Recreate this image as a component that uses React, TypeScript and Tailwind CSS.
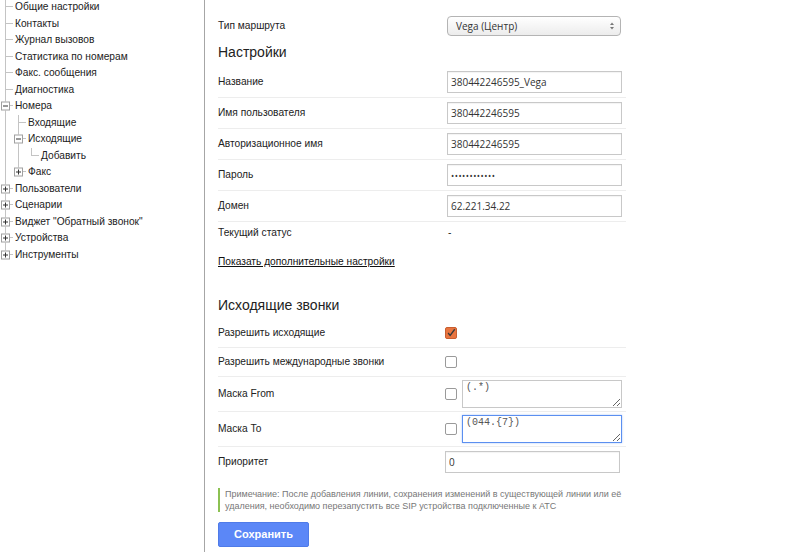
import React from 'react';

type Node = {
  label: string;
  open?: boolean;
  children?: Node[];
  collapsed?: boolean;
};

const tree: Node[] = [
  { label: 'Общие настройки' },
  { label: 'Контакты' },
  { label: 'Журнал вызовов' },
  { label: 'Статистика по номерам' },
  { label: 'Факс. сообщения' },
  { label: 'Диагностика' },
  {
    label: 'Номера',
    open: true,
    children: [
      { label: 'Входящие' },
      { label: 'Исходящие', open: true, children: [{ label: 'Добавить' }] },
      { label: 'Факс', collapsed: true },
    ],
  },
  { label: 'Пользователи', collapsed: true },
  { label: 'Сценарии', collapsed: true },
  { label: 'Виджет "Обратный звонок"', collapsed: true },
  { label: 'Устройства', collapsed: true },
  { label: 'Инструменты', collapsed: true },
];

const Expander = ({ minus }: { minus: boolean }) => (
  <span className="absolute left-[1px] top-1/2 -translate-y-1/2 w-[9px] h-[9px] border border-[#a0a0a0] bg-white flex items-center justify-center">
    <svg width="7" height="7" viewBox="0 0 7 7">
      <path d="M1 3.5h5" stroke="#333" strokeWidth="1" />
      {!minus && <path d="M3.5 1v5" stroke="#333" strokeWidth="1" />}
    </svg>
  </span>
);

const TreeRows = ({ nodes, guides }: { nodes: Node[]; guides: boolean[] }) => (
  <>
    {nodes.map((n, i) => {
      const last = i === nodes.length - 1;
      const hasKids = !!n.children || n.collapsed;
      return (
        <React.Fragment key={n.label}>
          <div className="flex h-[16.5px] items-stretch">
            {guides.map((g, gi) => (
              <div key={gi} className="w-[13px] shrink-0">
                {g && <div className="ml-[5px] h-full border-l border-[#c4c4c4]" />}
              </div>
            ))}
            <div className="relative w-[13px] shrink-0 flex flex-col">
              <div className="ml-[5px] h-1/2 border-l border-b border-[#c4c4c4]" />
              <div className={`ml-[5px] h-1/2 border-l ${last ? 'border-transparent' : 'border-[#c4c4c4]'}`} />
              {hasKids && <Expander minus={!!n.open} />}
            </div>
            <span className="ml-[2px] leading-[16.5px] whitespace-nowrap">{n.label}</span>
          </div>
          {n.children && n.open && <TreeRows nodes={n.children} guides={[...guides, !last]} />}
        </React.Fragment>
      );
    })}
  </>
);

const Row = ({ label, children }: { label: string; children: React.ReactNode }) => (
  <div className="flex items-center py-[4px] border-b border-[#ededed]">
    <div className="w-[229px] shrink-0">{label}</div>
    {children}
  </div>
);

const inputCls =
  'h-[22px] w-[175px] border border-[#c8c8c8] bg-white px-[3px] text-[10px] text-[#333] outline-none shadow-[inset_0_1px_1px_rgba(0,0,0,0.05)]';
const inputFont = { fontFamily: '"Open Sans", sans-serif' };
const monoFont = { fontFamily: '"Liberation Mono", "DejaVu Sans Mono", monospace' };

const Box = ({ checked = false }: { checked?: boolean }) =>
  checked ? (
    <span className="w-[12px] h-[12px] rounded-[2px] bg-[#e8743f] border border-[#c85e30] flex items-center justify-center">
      <svg width="12" height="12" viewBox="0 0 12 12">
        <path d="M2.5 6l2.5 3 5.5-7.5" fill="none" stroke="#3a3a3a" strokeWidth="1.6" />
      </svg>
    </span>
  ) : (
    <span className="w-[12px] h-[12px] rounded-[2px] bg-white border border-[#9a9a9a]" />
  );

export default function App() {
  return (
    <div
      className="w-[800px] h-[552px] overflow-hidden bg-white flex text-[10.2px] text-[#222]"
      style={{ fontFamily: '"Liberation Sans", Arial, sans-serif' }}
    >
      <aside className="w-[205px] shrink-0 border-r border-[#a6a6a6] h-full">
        <div className="-mt-[1px]">
          <TreeRows nodes={tree} guides={[]} />
        </div>
      </aside>

      <main className="pl-[13px] pt-[16px] w-[421px]">
        <div className="flex items-center h-[20px]">
          <div className="w-[229px] shrink-0">Тип маршрута</div>
          <div
            className="h-[20px] w-[174px] rounded-[4px] border border-[#b4b4b4] bg-gradient-to-b from-white to-[#ececec] flex items-center justify-between pl-[8px] pr-[5px] text-[10px] text-[#333]"
            style={inputFont}
          >
            <span>Vega (Центр)</span>
            <svg width="6" height="10" viewBox="0 0 6 10">
              <path d="M1 4l2-2.5L5 4z" fill="#777" />
              <path d="M1 6l2 2.5L5 6z" fill="#777" />
            </svg>
          </div>
        </div>

        <h2 className="mt-[6px] mb-[5px] text-[14px] leading-[20px] text-[#222]">Настройки</h2>

        <div className="w-[408px]">
          <Row label="Название">
            <input className={inputCls} style={inputFont} readOnly value="380442246595_Vega" />
          </Row>
          <Row label="Имя пользователя">
            <input className={inputCls} style={inputFont} readOnly value="380442246595" />
          </Row>
          <Row label="Авторизационное имя">
            <input className={inputCls} style={inputFont} readOnly value="380442246595" />
          </Row>
          <Row label="Пароль">
            <input
              className={`${inputCls} tracking-[0.5px] !text-[8.5px]`}
              style={inputFont}
              readOnly
              value="••••••••••••"
            />
          </Row>
          <Row label="Домен">
            <input className={inputCls} style={inputFont} readOnly value="62.221.34.22" />
          </Row>
          <div className="flex items-center h-[22px]">
            <div className="w-[230px] shrink-0">Текущий статус</div>
            <span>-</span>
          </div>
        </div>

        <a href="#" className="block mt-[11px] underline text-[#111] leading-[14px]">
          Показать дополнительные настройки
        </a>

        <h2 className="mt-[26px] mb-[4px] text-[14px] leading-[20px] text-[#222]">Исходящие звонки</h2>

        <div className="w-[408px]">
          <div className="flex items-center h-[29px] border-b border-[#ededed]">
            <div className="w-[227px] shrink-0">Разрешить исходящие</div>
            <Box checked />
          </div>
          <div className="flex items-center h-[29px] border-b border-[#ededed]">
            <div className="w-[227px] shrink-0">Разрешить международные звонки</div>
            <Box />
          </div>
          <div className="flex items-center py-[3px] border-b border-[#ededed]">
            <div className="w-[227px] shrink-0">Маска From</div>
            <Box />
            <textarea
              className="ml-[5px] h-[28px] w-[160px] border border-[#c8c8c8] px-[3px] py-0 text-[10px] leading-[13px] text-[#555] outline-none resize-y"
              style={monoFont}
              readOnly
              value="(.*)"
            />
          </div>
          <div className="flex items-center py-[3px] border-b border-[#ededed]">
            <div className="w-[227px] shrink-0">Маска To</div>
            <Box />
            <textarea
              className="ml-[5px] h-[28px] w-[160px] border border-[#5b8ff0] px-[3px] py-0 text-[10px] leading-[13px] text-[#555] outline-none resize-y shadow-[0_0_2px_rgba(91,143,240,0.5)]"
              style={monoFont}
              readOnly
              value="(044.{7})"
            />
          </div>
          <div className="flex items-center py-[4px]">
            <div className="w-[227px] shrink-0">Приоритет</div>
            <input className={inputCls} style={inputFont} readOnly value="0" />
          </div>
        </div>

        <div className="mt-[11px] w-[412px] border-l-2 border-[#8cc152] pl-[5px] text-[9px] leading-[12px] text-[#777]">
          Примечание: После добавления линии, сохранения изменений в существующей линии или её удаления,
          необходимо перезапустить все SIP устройства подключенные к АТС
        </div>

        <button className="mt-[10px] h-[25px] w-[91px] rounded-[2px] bg-[#5b87f7] border border-[#4f7be8] text-white font-bold text-[11px]">
          Сохранить
        </button>
      </main>
    </div>
  );
}
